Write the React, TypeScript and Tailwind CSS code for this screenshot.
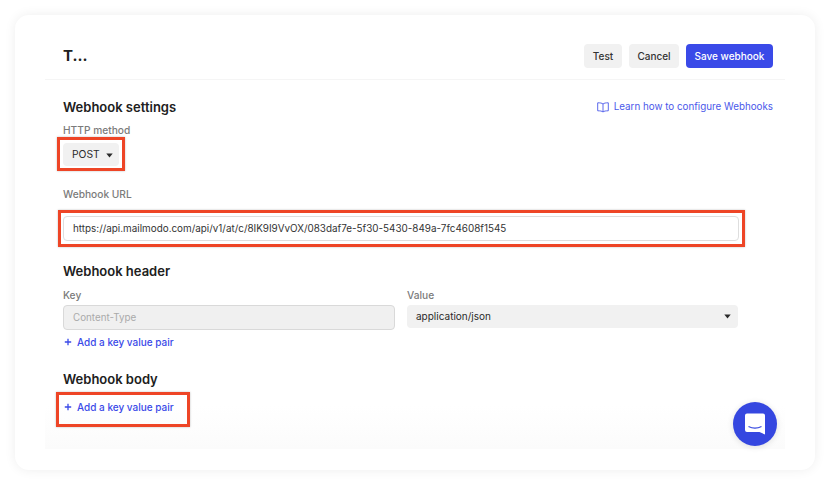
import React from "react";

function Plus() {
  return (
    <svg width="8" height="8" viewBox="0 0 8 8" className="text-[#3a4ae8]">
      <path d="M4 .8v6.400M.8 4h6.400" stroke="currentColor" strokeWidth="1.300" />
    </svg>
  );
}

function Caret() {
  return (
    <svg width="7" height="5" viewBox="0 0 7 5">
      <path d="M0.300 0.600h6.400L3.500 4.400z" fill="#2a2a2a" />
    </svg>
  );
}

function AddPair() {
  return (
    <div className="flex h-4 items-center gap-[5px] pl-px text-[10px] leading-4 text-[#3a4ae8]">
      <Plus />
      <span className="font-medium">Add a key value pair</span>
    </div>
  );
}

function Highlight({ className }: { className: string }) {
  return <div className={`pointer-events-none absolute border-[3px] border-[#ee4526] shadow-[0_0_2px_rgba(0,0,0,0.25)] ${className}`} />;
}

export default function App() {
  return (
    <div className="h-[485px] w-[830px] overflow-hidden bg-white p-[15px] font-['Inter',sans-serif] text-[#202020]">
      <div className="h-[455px] rounded-[14px] bg-white px-[30px] shadow-[0_0_12px_rgba(0,0,0,0.07)]">
        <div className="relative flex h-[434px] flex-col bg-gradient-to-b from-white from-90% to-[#fbfbfb]">
          <header className="flex h-[65px] shrink-0 items-center justify-between border-b border-[#f5f5f5] pl-[18px] pr-[12px] pt-[18px]">
            <h1 className="text-[15px] font-bold">T...</h1>
            <div className="flex gap-[7px] text-[10px] font-medium">
              <button className="h-6 w-[38px] rounded bg-[#f1f1f1] text-[#333]">Test</button>
              <button className="h-6 w-[50px] rounded bg-[#f1f1f1] text-[#333]">Cancel</button>
              <button className="h-6 w-[87px] rounded bg-[#3a4ae8] text-white">Save webhook</button>
            </div>
          </header>

          <main className="flex flex-col pl-[18px] pr-[12px]">
            <div className="mt-[17px] flex h-[20px] items-center justify-between">
              <h2 className="text-[13px] font-semibold leading-5">Webhook settings</h2>
              <div className="flex items-center gap-[5px] pt-px text-[9.800px] text-[#4a58ea]">
                <svg width="12" height="11" viewBox="0 0 12 11" fill="none" stroke="currentColor" strokeWidth="0.9">
                  <path d="M6 2C5 1 3 .8.7.8v8c2.300 0 4.300.2 5.300 1.200 1-1 3-1.200 5.300-1.200v-8C9 .8 7 1 6 2zM6 2v8" />
                </svg>
                <span>Learn how to configure Webhooks</span>
              </div>
            </div>
            <label className="mt-[5px] h-4 text-[10.200px] font-medium leading-4 text-[#7b7b7b]">HTTP method</label>
            <div className="relative mt-[5px] w-fit">
              <div className="flex h-[23px] w-[56px] items-center gap-[6px] rounded bg-[#f1f1f1] pl-[9px] pt-px text-[10.300px] text-[#2a2a2a]">
                POST <Caret />
              </div>
              <Highlight className="-left-[6px] -right-[6px] -top-[6px] -bottom-[5px]" />
            </div>
            <label className="mt-[20px] h-4 text-[10.200px] font-medium leading-4 text-[#7b7b7b]">Webhook URL</label>
            <div className="relative mt-[14px]">
              <div className="mr-[34px] flex h-[25px] items-center rounded border border-[#dedede] bg-white pl-[9px] text-[9.900px] text-[#333]">
                https://api.mailmodo.com/api/v1/at/c/8IK9I9VvOX/083daf7e-5f30-5430-849a-7fc4608f1545
              </div>
              <Highlight className="-left-[5px] right-[28px] -top-[6px] -bottom-[6px]" />
            </div>

            <h2 className="mt-[20px] h-5 text-[13px] font-semibold leading-5">Webhook header</h2>
            <div className="mt-[6px] grid grid-cols-[332px_331px] gap-x-3">
              <div>
                <label className="block h-4 text-[10.200px] font-medium leading-4 text-[#7b7b7b]">Key</label>
                <div className="mt-[2px] flex h-[25px] items-center rounded border border-[#d9d9d9] bg-[#f0f0f0] pl-[9px] pt-[2px] text-[9.800px] text-[#aaaaaa]">Content-Type</div>
              </div>
              <div>
                <label className="block h-4 text-[10.200px] font-medium leading-4 text-[#7b7b7b]">Value</label>
                <div className="mt-[2px] flex h-[23px] items-center justify-between rounded bg-[#f1f1f1] pl-[9px] pr-[7px] text-[10px] text-[#2a2a2a]">
                  application/json <Caret />
                </div>
              </div>
            </div>
            <div className="mt-[4px]"><AddPair /></div>

            <h2 className="mt-[19px] h-5 text-[13px] font-semibold leading-5">Webhook body</h2>
            <div className="relative mt-[10px] w-fit">
              <AddPair />
              <Highlight className="-left-[7px] -right-[16px] -top-[7px] -bottom-[12px]" />
            </div>
          </main>

          <div className="absolute left-[688px] top-[387px] flex h-11 w-11 items-center justify-center rounded-full bg-[#3547e0] shadow-[0_1px_6px_rgba(0,0,0,0.12)]">
            <svg width="22" height="24" viewBox="0 0 22 24">
              <path d="M3 1.500h16a2 2 0 0 1 2 2v19l-5.500-2.500H3a2 2 0 0 1-2-2v-14.500a2 2 0 0 1 2-2z" fill="white" />
              <path d="M4.500 14.500c4 2 9 2 13 0" stroke="#3547e0" strokeWidth="1.100" fill="none" />
            </svg>
          </div>
        </div>
      </div>
    </div>
  );
}
